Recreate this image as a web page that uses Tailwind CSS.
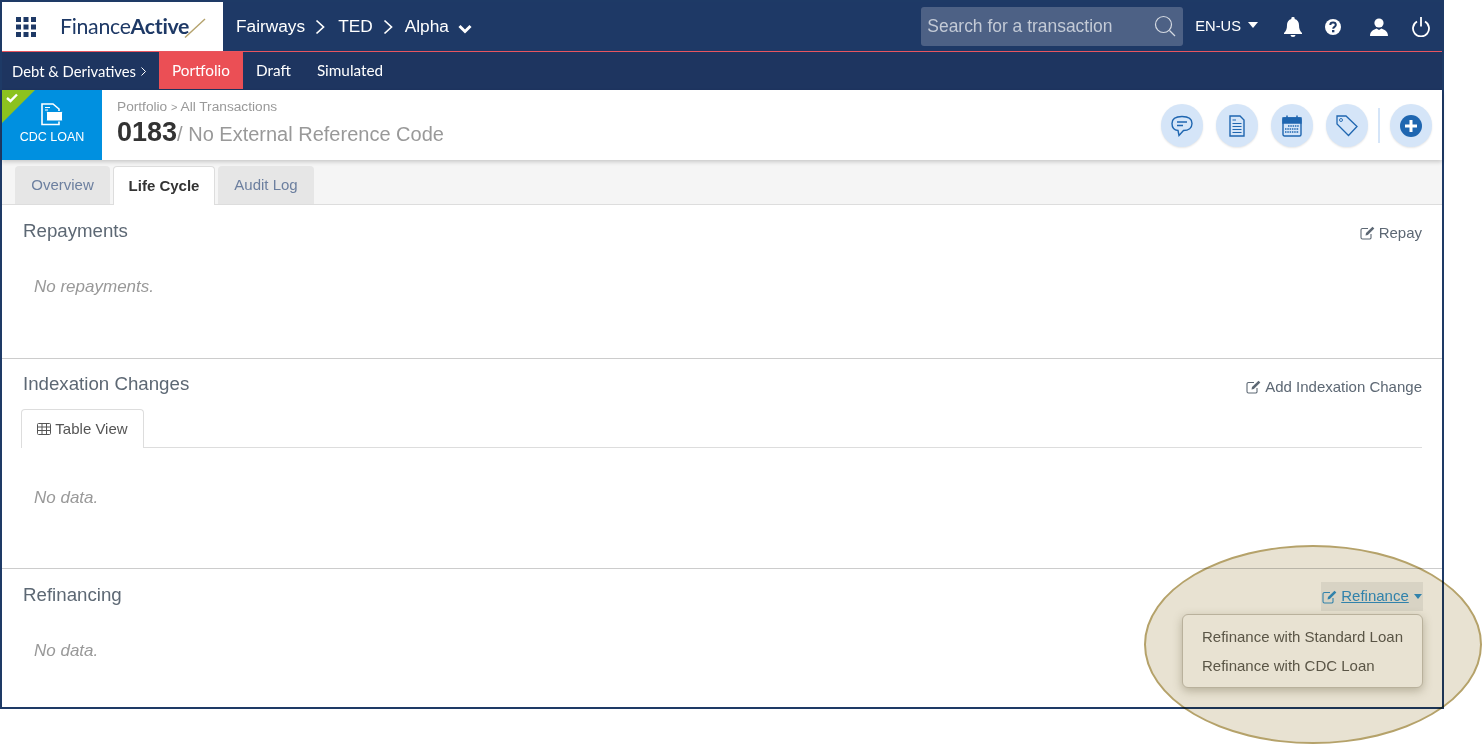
<!DOCTYPE html>
<html lang="en">
<head>
	<meta charset="UTF-8">
	<title>FinanceActive - Life Cycle</title>
	<script src="https://cdn.jsdelivr.net/npm/@tailwindcss/browser@4"></script>
</head>
<body class="bg-white font-['Liberation_Sans',Arial,sans-serif] overflow-hidden">
	<div class="relative w-[1482px] h-[744px] overflow-hidden">
		<!-- App frame -->
		<div class="w-[1444px] h-[709px] border-2 border-[#1e3a66] flex flex-col bg-white">
			<!-- Top bar -->
			<div class="h-[50px] shrink-0 flex bg-[#1e3966] border-b border-[#e8555f] text-white">
				<div class="w-[221px] bg-white flex items-center pl-[14px]">
					<svg class="w-[20px] h-[20px] text-[#1e3966]" viewBox="0 0 20 20" fill="currentColor">
						<rect x="0" y="0" width="5" height="5"/><rect x="7.5" y="0" width="5" height="5"/><rect x="15" y="0" width="5" height="5"/>
						<rect x="0" y="7.5" width="5" height="5"/><rect x="7.5" y="7.5" width="5" height="5"/><rect x="15" y="7.5" width="5" height="5"/>
						<rect x="0" y="15" width="5" height="5"/><rect x="7.5" y="15" width="5" height="5"/><rect x="15" y="15" width="5" height="5"/>
					</svg>
					<div class="ml-[24px] text-[21.300px] text-[#1e3966] font-['Lato',sans-serif] font-normal tracking-[-0.3px] leading-none">Finance<span class="font-bold">Active</span></div>
					<svg class="w-[22px] h-[20px] ml-[-5px] mt-[2px]" viewBox="0 0 22 20"><path d="M1 19.500 L21 1" stroke="#b4a26c" stroke-width="1.400" fill="none"/></svg>
				</div>
				<div class="flex items-center pl-[13px] text-[17.300px]">
					<span>Fairways</span>
					<svg class="w-[10px] h-[16px] ml-[10px]" viewBox="0 0 10 16" fill="none" stroke="white" stroke-width="1.700"><path d="M1.500 1.500 L8.500 8 L1.500 14.500"/></svg>
					<span class="ml-[13px]">TED</span>
					<svg class="w-[10px] h-[16px] ml-[10px]" viewBox="0 0 10 16" fill="none" stroke="white" stroke-width="1.700"><path d="M1.500 1.500 L8.500 8 L1.500 14.500"/></svg>
					<span class="ml-[12px]">Alpha</span>
					<svg class="w-[14px] h-[10px] ml-[9px] mt-[4px]" viewBox="0 0 14 10" fill="none" stroke="white" stroke-width="3"><path d="M1.500 2 L7 7.500 L12.500 2"/></svg>
				</div>
				<div class="ml-auto flex items-center pr-[12px]">
					<div class="w-[262px] h-[39px] mt-[-1px] rounded-[3px] bg-[#4d6185] flex items-center px-[6px] text-[17.450px] text-[#c3cad6]">
						<span>Search for a transaction</span>
						<svg class="w-[22px] h-[22px] ml-auto mr-[1px]" viewBox="0 0 22 22" fill="none" stroke="#d5dae2" stroke-width="1.200"><circle cx="9.500" cy="9.500" r="8"/><path d="M15.500 15.500 L21 21"/></svg>
					</div>
					<span class="ml-[12px] text-[14.700px]">EN-US</span>
					<svg class="w-[10px] h-[6px] ml-[7px] mb-[4px]" viewBox="0 0 10 6" fill="white"><path d="M0 0 H10 L5 6 Z"/></svg>
					<svg class="w-[18px] h-[20px] ml-[26px]" viewBox="0 0 18 20" fill="white"><path d="M9 0 a1.600 1.600 0 0 1 1.600 2 C13.500 2.700 15 5 15 8 c0 4 1 6 3 8 v1 H0 v-1 c2 -2 3 -4 3 -8 C3 5 4.500 2.700 7.400 2 A1.600 1.600 0 0 1 9 0 Z M6.500 18 h5 a2.500 2 0 0 1 -5 0 Z"/></svg>
					<svg class="w-[16px] h-[16px] ml-[23px]" viewBox="0 0 16 16"><circle cx="8" cy="8" r="8" fill="white"/><path d="M5.300 6 C5.300 2.800 10.800 2.800 10.800 6 C10.800 7.800 8.200 7.900 8.200 9.700" fill="none" stroke="#1e3966" stroke-width="2"/><rect x="7" y="11" width="2.400" height="2.300" fill="#1e3966"/></svg>
					<svg class="w-[18px] h-[18px] ml-[29px]" viewBox="0 0 18 18" fill="white"><circle cx="9" cy="5" r="4.600"/><path d="M0 18 C0 13 4 11.500 6.500 10.500 L9 12 L11.500 10.500 C14 11.500 18 13 18 18 Z"/></svg>
					<svg class="w-[18px] h-[20px] ml-[24px]" viewBox="0 0 18 20" fill="none" stroke="white" stroke-width="1.800"><path d="M5 4.500 A8 8 0 1 0 13 4.500"/><path d="M9 0 V9.500"/></svg>
				</div>
			</div>
			<!-- Module nav -->
			<div class="h-[38px] shrink-0 flex items-stretch bg-[#1e3560] text-white font-['Lato',sans-serif] text-[15.300px]">
				<div class="w-[157px] pl-[10px] flex items-center pt-[1px] text-[14.800px]">Debt &amp; Derivatives
					<svg class="w-[5px] h-[9px] ml-[5px]" viewBox="0 0 5 9" fill="none" stroke="white" stroke-width="1"><path d="M0.500 0.500 L4.500 4.500 L0.500 8.500"/></svg>
				</div>
				<div class="w-[84px] mb-[1px] bg-[#eb4f55] flex items-center justify-center">Portfolio</div>
				<div class="ml-[13px] pb-[2px] flex items-center">Draft</div>
				<div class="ml-[26px] pb-[2px] flex items-center">Simulated</div>
			</div>
			<!-- Transaction header -->
			<div class="relative z-10 h-[70px] shrink-0 flex bg-white shadow-[0_2px_4px_rgba(0,0,0,0.18)]">
				<div class="relative w-[100px] bg-[#0090e0] flex flex-col items-center pt-[13px] text-white text-[12.500px] leading-[16px]">
					<div class="absolute top-0 left-0 w-[33px] h-[33px] bg-[#8cc21f] [clip-path:polygon(0_0,100%_0,0_100%)]"></div>
					<svg class="absolute top-[3px] left-[4px] w-[12px] h-[10px]" viewBox="0 0 12 10" fill="none" stroke="white" stroke-width="2.400"><path d="M1 5 L4.500 8 L11 1.500"/></svg>
					<svg class="w-[22px] h-[23px]" viewBox="0 0 22 23">
						<path d="M1 1 H12 L18 6 V21.500 H1 Z" fill="none" stroke="white" stroke-width="1.600"/>
						<rect x="5.500" y="8.500" width="16" height="9.500" rx="1" fill="white" stroke="#0090e0" stroke-width="1"/>
						<path d="M4 4.500 H9 M4 7 H7" stroke="white" stroke-width="1"/>
					</svg>
					<span class="mt-[3px]">CDC LOAN</span>
				</div>
				<div class="pl-[15px] pt-[9px]">
					<div class="text-[13.700px] leading-[15px] text-[#999]">Portfolio <span class="text-[11px]">&gt;</span> All Transactions</div>
					<div class="mt-[2px] leading-[30px] text-[20px] text-[#999]"><span class="text-[27px] font-bold text-[#333]">0183</span>/ No External Reference Code</div>
				</div>
				<div class="ml-auto flex items-center pr-[10px] pt-[1px]">
					<div class="w-[42px] h-[43px] rounded-full bg-[#d5e5f8] shadow-[0_1px_2px_rgba(0,0,0,0.1)] flex items-center justify-center">
						<svg class="w-[22px] h-[22px] text-[#1f66b0]" viewBox="0 0 22 22" fill="none" stroke="currentColor" stroke-width="1.400"><path d="M7 15.500 C3 15 1 12.500 1 8.500 C1 4 4.500 1.500 11 1.500 C17.500 1.500 21 4 21 8.500 C21 13 17.500 15.500 12.500 15.500 L8 20.500 Z"/><path d="M6 7 H16 M6 10.500 H12"/></svg>
					</div>
					<div class="ml-[13px] w-[42px] h-[43px] rounded-full bg-[#d5e5f8] shadow-[0_1px_2px_rgba(0,0,0,0.1)] flex items-center justify-center">
						<svg class="w-[16px] h-[22px] text-[#1f66b0]" viewBox="0 0 16 22" fill="none" stroke="currentColor" stroke-width="1.400"><path d="M1 1 H11 L15 5 V21 H1 Z"/><path d="M3.500 5 H7 M3.500 8.500 H12.500 M3.500 11.500 H12.500 M3.500 14.500 H12.500 M3.500 17.500 H12.500" stroke-width="1.100"/></svg>
					</div>
					<div class="ml-[13px] w-[42px] h-[43px] rounded-full bg-[#d5e5f8] shadow-[0_1px_2px_rgba(0,0,0,0.1)] flex items-center justify-center">
						<svg class="w-[20px] h-[22px] text-[#1f66b0]" viewBox="0 0 20 22" fill="none" stroke="currentColor" stroke-width="1.400"><rect x="1" y="3" width="18" height="18" rx="1.500"/><path d="M1 3 H19 V8 H1 Z" fill="currentColor"/><path d="M5 0.500 V5 M15 0.500 V5" stroke-width="1.500"/><path d="M6 11 H17 M3 14 H17 M3 17 H17" stroke-width="1.500" stroke-dasharray="1.500 0.800"/></svg>
					</div>
					<div class="ml-[13px] w-[42px] h-[43px] rounded-full bg-[#d5e5f8] shadow-[0_1px_2px_rgba(0,0,0,0.1)] flex items-center justify-center">
						<svg class="w-[22px] h-[22px] text-[#1f66b0]" viewBox="0 0 22 22" fill="none" stroke="currentColor" stroke-width="1.300"><path d="M1 1 H10 L21 11.500 L12.500 20.500 L1 9 Z"/><circle cx="5" cy="5" r="1.500" stroke-width="0.900"/></svg>
					</div>
					<div class="ml-[10px] w-[2px] h-[35px] bg-[#d5e5f8]"></div>
					<div class="ml-[10px] w-[42px] h-[43px] rounded-full bg-[#d5e5f8] shadow-[0_1px_2px_rgba(0,0,0,0.1)] flex items-center justify-center">
						<svg class="w-[22px] h-[22px]" viewBox="0 0 22 22"><circle cx="11" cy="11" r="11" fill="#1f66b0"/><path d="M11 5 V17 M5 11 H17" stroke="white" stroke-width="3"/></svg>
					</div>
				</div>
			</div>
			<!-- Tabs -->
			<div class="h-[45px] shrink-0 bg-[#f5f5f5] border-b border-[#ddd] flex items-end pl-[13px] gap-[3px] text-[15px]">
				<div class="w-[95px] h-[38px] rounded-t-[4px] bg-[#e6e6e6] text-[#6c7f9f] flex items-center justify-center">Overview</div>
				<div class="w-[102px] h-[39px] mb-[-1px] rounded-t-[4px] bg-white border border-b-0 border-[#ddd] font-bold text-[#333] flex items-center justify-center">Life Cycle</div>
				<div class="w-[96px] h-[38px] rounded-t-[4px] bg-[#e6e6e6] text-[#6c7f9f] flex items-center justify-center">Audit Log</div>
			</div>
			<!-- Repayments -->
			<section class="h-[154px] shrink-0 border-b border-[#ccc] pl-[21px] pr-[20px] pt-[14px]">
				<div class="flex justify-between items-start">
					<h2 class="text-[18.700px] leading-[24px] text-[#5d6874]">Repayments</h2>
					<div class="flex items-center text-[15px] leading-[20px] text-[#5d6874] mt-[4px]">
						<svg class="w-[15px] h-[14px] mr-[4px]" viewBox="0 0 15 14" fill="none" stroke="#5d6874" stroke-width="1.100"><path d="M11 8 V12 A1.500 1.500 0 0 1 9.500 13 H2.500 A1.500 1.500 0 0 1 1 11.500 V4 A1.500 1.500 0 0 1 2.500 2.500 H8"/><path d="M5.500 9.500 L6 7 L12.500 0.800 L14.300 2.600 L7.800 9 Z" fill="#5d6874" stroke="none"/></svg>
						Repay
					</div>
				</div>
				<p class="mt-[31px] pl-[11px] text-[17px] italic text-[#999]">No repayments.</p>
			</section>
			<!-- Indexation Changes -->
			<section class="h-[210px] shrink-0 border-b border-[#ccc] pl-[21px] pr-[20px] pt-[13px]">
				<div class="flex justify-between items-start">
					<h2 class="text-[18.700px] leading-[24px] text-[#5d6874]">Indexation Changes</h2>
					<div class="flex items-center text-[15px] leading-[20px] text-[#5d6874] mt-[5px]">
						<svg class="w-[15px] h-[14px] mr-[4px]" viewBox="0 0 15 14" fill="none" stroke="#5d6874" stroke-width="1.100"><path d="M11 8 V12 A1.500 1.500 0 0 1 9.500 13 H2.500 A1.500 1.500 0 0 1 1 11.500 V4 A1.500 1.500 0 0 1 2.500 2.500 H8"/><path d="M5.500 9.500 L6 7 L12.500 0.800 L14.300 2.600 L7.800 9 Z" fill="#5d6874" stroke="none"/></svg>
						Add Indexation Change
					</div>
				</div>
				<div class="mt-[12px] ml-[-2px] border-b border-[#ddd] flex h-[39px]">
					<div class="w-[123px] h-[39px] rounded-t-[4px] border border-b-0 border-[#ddd] bg-white flex items-center justify-center text-[15px] text-[#555]">
						<svg class="w-[14px] h-[12px] mr-[4px]" viewBox="0 0 14 12" fill="none" stroke="#555" stroke-width="1"><rect x="0.500" y="0.500" width="13" height="11" rx="1"/><path d="M0.500 4 H13.500 M0.500 7.500 H13.500 M5 0.500 V11.500 M9.500 0.500 V11.500"/></svg>
						Table View
					</div>
				</div>
				<p class="mt-[37px] pl-[11px] text-[17px] italic text-[#999]">No data.</p>
			</section>
			<!-- Refinancing -->
			<section class="grow pl-[21px] pr-[20px] pt-[14px]">
				<div class="flex justify-between items-start">
					<h2 class="text-[18.700px] leading-[24px] text-[#5d6874]">Refinancing</h2>
				</div>
				<p class="mt-[31px] pl-[11px] text-[17px] italic text-[#999]">No data.</p>
			</section>
		</div>
		<!-- Callout: highlights the refinance menu, the frame shows through it -->
		<div class="absolute left-[1144px] top-[545px] w-[338px] h-[199px] rounded-[50%] bg-[#e8e2d2] border-2 border-[#b5a26a] mix-blend-multiply"></div>
		<div class="absolute left-[1321px] top-[582px] w-[102px] h-[29px] bg-[#eeeeee] flex items-center justify-center text-[15px] text-[#3593d0] underline mix-blend-multiply">
			<svg class="w-[15px] h-[14px] mr-[4px]" viewBox="0 0 15 14" fill="none" stroke="#3593d0" stroke-width="1.100"><path d="M11 8 V12 A1.500 1.500 0 0 1 9.500 13 H2.500 A1.500 1.500 0 0 1 1 11.500 V4 A1.500 1.500 0 0 1 2.500 2.500 H8"/><path d="M5.500 9.500 L6 7 L12.500 0.800 L14.300 2.600 L7.800 9 Z" fill="#3593d0" stroke="none"/></svg>
			Refinance
			<svg class="w-[8px] h-[5px] ml-[5px]" viewBox="0 0 8 5" fill="#3593d0"><path d="M0 0 H8 L4 5 Z"/></svg>
		</div>
		<div class="absolute left-[1182px] top-[614px] w-[241px] h-[74px] rounded-[6px] bg-[#e8e2d2] border border-[#b9b19c] shadow-[0_3px_10px_rgba(90,80,50,0.35)] pl-[19px] pt-[7px] text-[15px] leading-[29px] text-[#5a5546]">
			<div>Refinance with Standard Loan</div>
			<div>Refinance with CDC Loan</div>
		</div>
	</div>
</body>
</html>
